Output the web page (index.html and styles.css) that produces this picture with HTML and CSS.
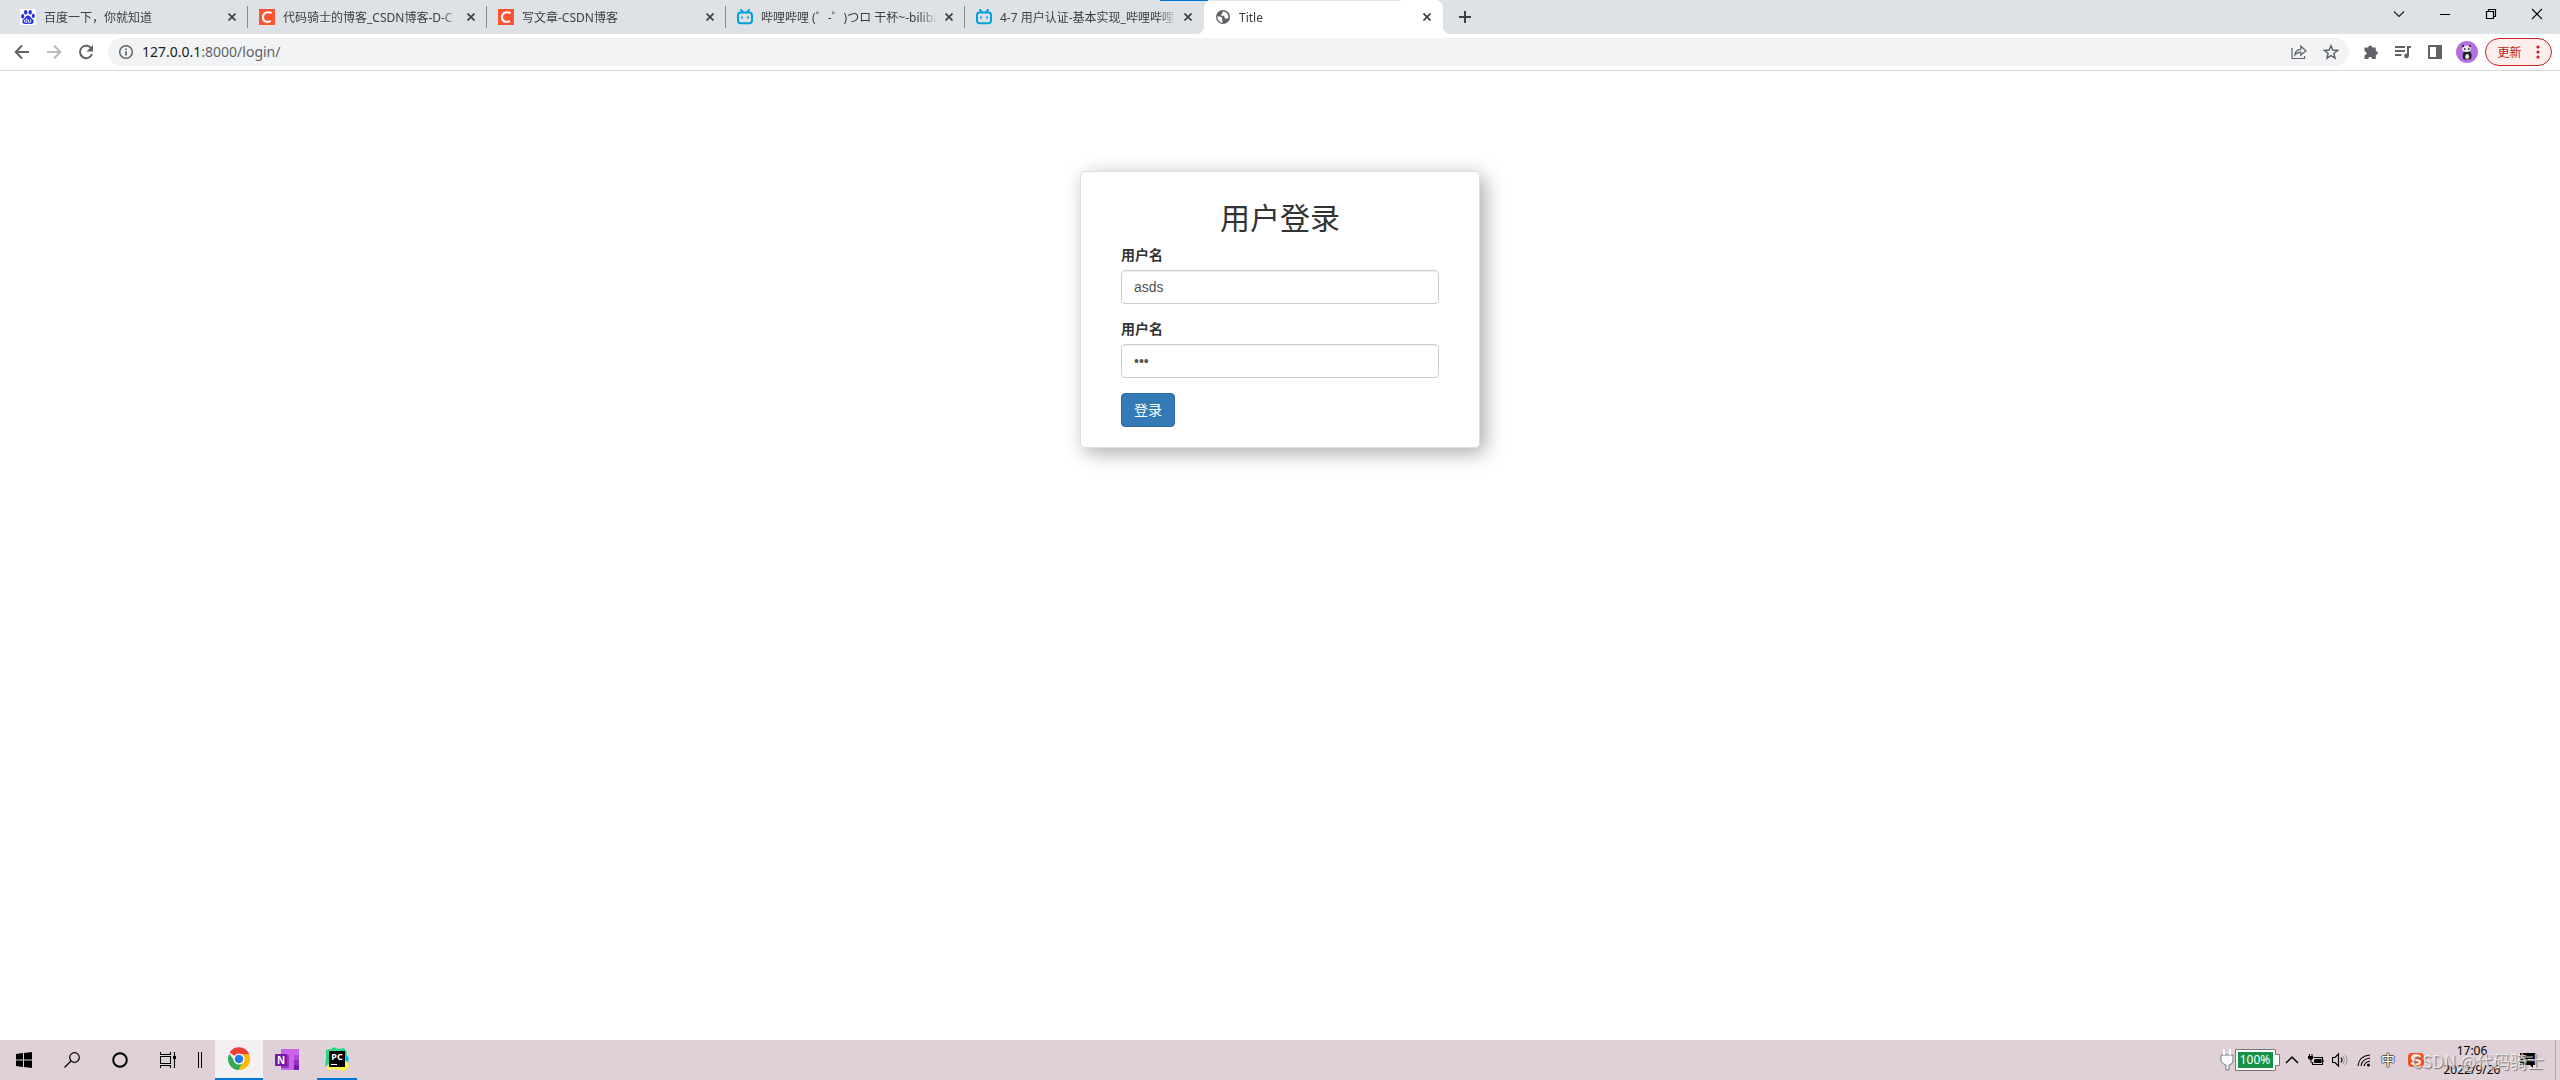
FILE: index.html
```html
<!DOCTYPE html>
<html lang="zh">
<head>
<meta charset="utf-8">
<title>Title</title>
<link rel="stylesheet" href="styles.css">
</head>
<body>
<svg class="defs" aria-hidden="true">
  <symbol id="x" viewBox="0 0 8 8"><path d="M.5.5l7 7m0-7l-7 7" stroke="#3c4043" stroke-width="1.7"/></symbol>
  <symbol id="bili" viewBox="0 0 16 16"><path d="M4 .8l2 2.4M12 .8l-2 2.4" stroke="#00a1d6" stroke-width="1.8" stroke-linecap="round"/><rect x="1" y="3.6" width="14" height="10.6" rx="2.6" fill="none" stroke="#00a1d6" stroke-width="2"/><path d="M5 7.4v2M11 7.4v2" stroke="#00a1d6" stroke-width="1.8"/></symbol>
  <symbol id="csdn" viewBox="0 0 16 16"><path fill="#fc5531" d="M0 0h16v16H0z"/><path d="M12.6 4.1C9 2.200 4 3.300 3.900 8.300c0 4.600 4.400 5.400 8 3.900" fill="none" stroke="#fff" stroke-width="2"/></symbol>
</svg>

<header class="browser">
  <div class="tabstrip">
    <nav class="tabs">
      <div class="tab">
        <svg class="fav" viewBox="0 0 16 16"><rect width="16" height="16" rx="1" fill="#fff"/><g fill="#2932e1"><ellipse cx="5.700" cy="3.300" rx="1.700" ry="2.400"/><ellipse cx="10.200" cy="3.300" rx="1.700" ry="2.400"/><ellipse cx="2.700" cy="7.200" rx="1.600" ry="2.200"/><ellipse cx="13.300" cy="6.900" rx="1.600" ry="2.100"/><path d="M8 6.600c2 0 2.700 2.200 4.400 3.500 2.200 1.700 1.400 5-1.200 5-1.400 0-1.800-.4-3.200-.4s-1.800.4-3.200.4c-2.700 0-3.400-3.300-1.200-5C5.300 8.800 6 6.600 8 6.600z"/></g><path d="M6.800 9.300v4h-1.300a1.200 1.200 0 010-2.500h1.300M8.500 10.500v2.700h2.200v-2.700" fill="none" stroke="#fff" stroke-width=".9"/></svg>
        <a class="name" href="#">百度一下，你就知道</a>
        <button class="close" aria-label="关闭"><svg><use href="#x"/></svg></button>
      </div>
      <div class="tab">
        <svg class="fav"><use href="#csdn"/></svg>
        <a class="name" href="#">代码骑士的博客_CSDN博客-D-C</a>
        <button class="close" aria-label="关闭"><svg><use href="#x"/></svg></button>
      </div>
      <div class="tab">
        <svg class="fav"><use href="#csdn"/></svg>
        <a class="name" href="#">写文章-CSDN博客</a>
        <button class="close" aria-label="关闭"><svg><use href="#x"/></svg></button>
      </div>
      <div class="tab">
        <svg class="fav"><use href="#bili"/></svg>
        <a class="name" href="#">哔哩哔哩 (゜-゜)つロ 干杯~-bilibili</a>
        <button class="close" aria-label="关闭"><svg><use href="#x"/></svg></button>
      </div>
      <div class="tab last">
        <svg class="fav"><use href="#bili"/></svg>
        <a class="name" href="#">4-7 用户认证-基本实现_哔哩哔哩</a>
        <button class="close" aria-label="关闭"><svg><use href="#x"/></svg></button>
      </div>
      <div class="tab active">
        <svg class="fav" viewBox="0 0 16 16"><circle cx="8" cy="8" r="7" fill="#5f6368"/><path d="M8.300 2.300c-1.300.8-.3 2-1.500 2.600-1 .5-1.200 1.200-.5 1.700.8.500 2.600-.2 3.200 1 .5 1-.3 1.700.6 2 1 .3 1.800-.6 3.300-.4.400-3-1.500-6-5.100-6.900zM2.400 7.300c2 .2 3.900.5 4.500 1.500.5 1-.2 1.600.2 2.400.4.600.5 1.500.3 2.500-3.100-.3-5.400-3.200-5-6.400z" fill="#fff"/></svg>
        <a class="name" href="#">Title</a>
        <button class="close" aria-label="关闭"><svg><use href="#x"/></svg></button>
      </div>
    </nav>
    <button class="newtab" aria-label="新标签页"><svg viewBox="0 0 12 12"><path d="M6 0v12M0 6h12" stroke="#3c4043" stroke-width="2"/></svg></button>
    <div class="loading"></div>
    <div class="winctl">
      <button aria-label="搜索标签页"><svg viewBox="0 0 12 12"><path d="M1 3.500l5 5 5-5" fill="none" stroke="#222" stroke-width="1.200"/></svg></button>
      <button aria-label="最小化"><svg viewBox="0 0 12 12"><path d="M1 6.500h10" stroke="#000"/></svg></button>
      <button aria-label="还原"><svg viewBox="0 0 12 12"><path d="M1.500 3.500h7v7h-7zM3.500 3V1.500h7v7H9" fill="none" stroke="#000" stroke-width="1.200"/></svg></button>
      <button aria-label="关闭窗口"><svg viewBox="0 0 12 12"><path d="M1 1l10 10M11 1L1 11" stroke="#000" stroke-width="1.100"/></svg></button>
    </div>
  </div>
  <div class="toolbar">
    <button class="nav" aria-label="后退"><svg viewBox="0 0 16 16"><path d="M15 8H2M8 1.500L1.700 8 8 14.500" fill="none" stroke="#5f6368" stroke-width="2"/></svg></button>
    <button class="nav" aria-label="前进"><svg viewBox="0 0 16 16"><path d="M1 8h13M8 1.500L14.300 8 8 14.500" fill="none" stroke="#babcbe" stroke-width="2"/></svg></button>
    <button class="nav" aria-label="重新加载"><svg viewBox="0 0 16 16"><path d="M13.600 5A6.200 6.200 0 1014 10" fill="none" stroke="#5f6368" stroke-width="2"/><path d="M15 1v6.500H8.500z" fill="#5f6368"/></svg></button>
    <div class="omnibox">
      <svg class="ico" viewBox="0 0 16 16"><circle cx="8" cy="8" r="6.300" fill="none" stroke="#5f6368" stroke-width="1.500"/><path d="M8 7.200v4.200M8 4.400v1.700" stroke="#5f6368" stroke-width="1.700"/></svg>
      <div class="url"><span>127.0.0.1</span>:8000/login/</div>
      <button aria-label="分享"><svg class="ico" viewBox="0 0 16 16"><path d="M1 4v10.500h12.500V12" fill="none" stroke="#5f6368" stroke-width="1.200"/><path d="M3.800 11c.5-4 2.700-5.600 6-5.700V2.200L15 6.800l-5.200 4.500V8.200C7 8.200 5.300 9 3.800 11z" fill="none" stroke="#5f6368" stroke-width="1.200"/></svg></button>
      <button aria-label="收藏"><svg class="ico" viewBox="0 0 16 16"><path d="M8 1.800l1.800 4.300 4.700.4-3.600 3 1.100 4.600L8 11.700l-4 2.400 1.100-4.600-3.600-3 4.700-.4z" fill="none" stroke="#5f6368" stroke-width="1.500"/></svg></button>
    </div>
    <div class="actions">
      <button aria-label="扩展程序"><svg class="ico" viewBox="0 0 16 16"><path d="M1.500 3.500h3.700a2 2 0 114 0h3.600v3.600a2 2 0 110 4V15H9.200a2 2 0 10-4 0H1.500v-3.700a2 2 0 100-4z" fill="#5f6368"/></svg></button>
      <button aria-label="媒体控件"><svg class="ico" viewBox="0 0 16 16"><path d="M0 3h10M0 7h10M0 11h6.500M13 12V3h3" fill="none" stroke="#5f6368" stroke-width="2"/><circle cx="11.500" cy="12" r="2.400" fill="#5f6368"/></svg></button>
      <button aria-label="侧边栏"><svg class="ico" viewBox="0 0 16 16"><path d="M1 1h14v14H1zM3 3v10h6V3z" fill="#5f6368" fill-rule="evenodd"/></svg></button>
      <button class="avatar" aria-label="用户"><svg viewBox="0 0 22 22"><circle cx="11" cy="11" r="11" fill="#b46fe3"/><path d="M8 10.500c-2 3-1.500 7.500.5 8h5.500c2-1 2-5 .5-8z" fill="#222"/><ellipse cx="11.200" cy="15.500" rx="2" ry="2.600" fill="#e6e6e6"/><ellipse cx="10.500" cy="7.800" rx="4.400" ry="3.300" fill="#e8e6ea"/><circle cx="7" cy="5" r="1.200" fill="#333"/><circle cx="14" cy="5" r="1.200" fill="#444"/><path d="M8 8h1.500M12 8h1.500" stroke="#222" stroke-width="1.300"/></svg></button>
      <button class="update">更新<svg viewBox="0 0 4 14"><g fill="#c5221f"><circle cx="2" cy="2" r="1.600"/><circle cx="2" cy="7" r="1.600"/><circle cx="2" cy="12" r="1.600"/></g></svg></button>
    </div>
  </div>
</header>

<main class="page">
  <form class="account">
    <h2>用户登录</h2>
    <div class="group">
      <label for="user">用户名</label>
      <input id="user" type="text" value="asds">
    </div>
    <div class="group">
      <label for="pwd">用户名</label>
      <input id="pwd" type="password" value="123">
    </div>
    <button class="submit" type="button">登录</button>
  </form>
</main>

<footer class="taskbar">
  <div class="apps">
    <button aria-label="开始"><svg viewBox="0 0 16 16"><path d="M0 2l7-1v6.500H0zM8 .9L16 0v7.500H8zM0 8.500h7V15l-7-1zM8 8.500h8V16l-8-1z"/></svg></button>
    <button aria-label="搜索"><svg viewBox="0 0 16 16"><circle cx="10.500" cy="5.500" r="4.800" fill="none" stroke="#000" stroke-width="1.200"/><path d="M7 9L.5 15.500" stroke="#000" stroke-width="1.300"/></svg></button>
    <button aria-label="Cortana"><svg viewBox="0 0 16 16"><circle cx="8" cy="8" r="6.800" fill="none" stroke="#000" stroke-width="2"/></svg></button>
    <button aria-label="任务视图"><svg viewBox="0 0 16 16"><path d="M.5 0v2.500h10V0M.5 16v-2.500h10V16M.5 4.500h10v7H.5zM14.500 0v16" fill="none" stroke="#000" stroke-width="1.100"/><path d="M13 4h3v3h-3z"/></svg></button>
    <span class="grip"></span>
    <button class="chrome" aria-label="Chrome"><svg viewBox="0 0 24 24"><path d="M12 12L2.500 5.500A11 11 0 0122.200 7.500H12z" fill="#ea4335"/><path d="M12 7.500h10.200A11 11 0 0111.500 23L16 14z" fill="#fbbc04"/><path d="M2.300 6.800A11 11 0 0011.500 23L16 14.500l-8 0z" fill="#34a853"/><circle cx="12" cy="12" r="5.600" fill="#fff"/><circle cx="12" cy="12" r="4.300" fill="#2879e8"/></svg></button>
    <button aria-label="OneNote"><svg viewBox="0 0 24 24"><path fill="#ca64ea" d="M6 1h18v21H6z"/><path fill="#ae4bd5" d="M19 7h5v5h-5z"/><path fill="#9332bf" d="M19 12h5v5h-5z"/><path fill="#7719aa" d="M19 17h5v5h-5zM0 6h12v12H0z"/><path fill="#8f3bb5" d="M12 7h2v13H6v-2h6z"/><text x="6" y="16" class="glyph">N</text></svg></button>
    <button class="pycharm" aria-label="PyCharm"><svg viewBox="0 0 24 24"><path fill="#21d789" d="M1 3l5-1 3-2 4 2 6-1 3 4-3 14H3L0 19l1-8z"/><path fill="#07c3f2" d="M18 9l2-3 4 5-1 4-5-2z"/><path fill="#fcf84a" d="M19 12l4 5 1 3-5 4-8-2-8 1-1-5z"/><path d="M4 4h16v16H4z"/><path fill="#fff" d="M6 17h6v1H6z"/><text x="12" y="13" class="glyph small">PC</text></svg></button>
  </div>
  <div class="tray">
    <svg class="battery" viewBox="0 0 62 24"><path d="M4 2v5M10 2v5M1 7h12v6q0 3-4 4v5H6v-5q-4-1-5-4z" fill="#fff" stroke="#777"/><path d="M4 1v6M10 1v6" stroke="#fff" stroke-width="2"/><path d="M15.500 1.500h40v5h4v11h-4v5h-40z" fill="#fff" stroke="#777"/><path fill="#169347" d="M18 4h35v16H18z"/><text x="35" y="16">100%</text></svg>
    <svg viewBox="0 0 16 16"><path d="M2 11l6-6 6 6" fill="none" stroke="#000" stroke-width="1.500"/></svg>
    <svg viewBox="0 0 16 16"><path d="M5.500 5.500h9v7h-10V10M15 8v2" fill="none" stroke="#000" stroke-width="1.200"/><path d="M7 7h6.500v4H6V8zM0 4h5v2.500L3.500 8v3h-1V8L0 6.500zM1 2h1v2H1zM3.500 2h1v2h-1z"/></svg>
    <svg viewBox="0 0 16 16"><path d="M.5 5.500H3L6.500 2v12L3 10.500H.5zM9 5.500q2 2.500 0 5" fill="none" stroke="#000" stroke-width="1.200"/><path d="M11 4q3 4 0 8M13 2.500q4 5.500 0 11" fill="none" stroke="#999"/></svg>
    <svg viewBox="0 0 16 16"><path d="M2 14Q3 4 14 3M5 14q1-7 9-8M8 14q1-4 6-5" fill="none" stroke="#000" stroke-width="1.100"/><circle cx="12.500" cy="13" r="1.500"/></svg>
    <span class="ime">中</span>
    <svg class="sogou" viewBox="0 0 16 16"><rect x="0" y="1" width="16" height="14" rx="4" fill="#f4511e"/><path d="M12 4Q4 2 4 6c0 3 8 1 8 4s-6 3-9 1" fill="none" stroke="#fff" stroke-width="2"/></svg>
    <div class="clock"><time>17:06</time><time>2022/9/26</time></div>
    <svg class="notice" viewBox="0 0 16 16"><path d="M0 1h16v12h-3v3l-3-3H0z"/><path d="M3 5h10M3 8h10" stroke="#ddd"/></svg>
    <span class="peek"></span>
  </div>
  <div class="mark">CSDN @代码骑士</div>
</footer>
</body>
</html>
```
FILE: styles.css
```css
* { box-sizing: border-box; }
body { margin: 0; min-height: 100vh; display: flex; flex-direction: column; background: #fff; font-family: "Noto Sans", "Noto Sans CJK SC", sans-serif; font-size: 12px; color: #3c4043; }
button { border: 0; padding: 0; background: none; font: inherit; color: inherit; display: flex; align-items: center; justify-content: center; }
a { color: inherit; text-decoration: none; }
.defs { position: absolute; width: 0; height: 0; }

.tabstrip { position: relative; display: flex; height: 34px; background: #dee1e6; }
.tabs { display: flex; padding-left: 9px; }
.tab { position: relative; display: flex; align-items: center; width: 239px; padding: 0 7px 0 11px; border-right: 1px solid #86898d; border-image: linear-gradient(transparent 7px, #86898d 7px, #86898d 27px, transparent 27px) 1; }
.tab.last { border-image: none; border-color: transparent; }
.tab.active { background: #fff; border: 0; border-radius: 8px 8px 0 0; padding: 0 8px 0 11px; }
.tab.active::before, .tab.active::after { content: ""; position: absolute; bottom: 0; width: 8px; height: 8px; }
.tab.active::before { right: 100%; background: radial-gradient(circle at 0 0, transparent 8px, #fff 8px); }
.tab.active::after { left: 100%; background: radial-gradient(circle at 100% 0, transparent 8px, #fff 8px); }
.fav { width: 16px; height: 16px; flex: none; }
.name { flex: 1; margin: 0 4px 0 8px; padding-top: 2px; line-height: 20px; white-space: nowrap; overflow: hidden; mask-image: linear-gradient(to right, #000 90%, transparent); }
.close { width: 16px; height: 16px; }
.close svg { width: 8px; height: 8px; }
.newtab { width: 44px; }
.newtab svg { width: 12px; height: 12px; }
.loading { position: absolute; top: 0; left: 1160px; width: 241px; height: 1px; background: linear-gradient(to right, #0078d7 48px, #e3e3e3 48px); }
.winctl { display: flex; margin-left: auto; height: 28px; }
.winctl button { width: 46px; }
.winctl svg { width: 12px; height: 12px; }

.toolbar { display: flex; align-items: center; height: 37px; padding: 0 8px 0 6px; border-bottom: 1px solid #d5d7da; }
.nav { width: 32px; height: 32px; }
.nav svg { width: 16px; height: 16px; }
.ico { width: 16px; height: 16px; flex: none; }
.omnibox { flex: 1; display: flex; align-items: center; height: 28px; margin-left: 6px; padding: 0 10px; border-radius: 14px; background: #f1f3f4; }
.url { flex: 1; margin-left: 8px; font-size: 14px; line-height: 20px; color: #5f6368; }
.url span { color: #202124; }
.omnibox button { width: 16px; margin-left: 16px; }
.actions { display: flex; align-items: center; gap: 16px; margin-left: 14px; }
.avatar { width: 22px; height: 22px; margin: 0 -9px 0 -3px; }
.avatar svg { width: 22px; height: 22px; }
.update { width: 67px; height: 28px; gap: 14px; border: 1px solid #c5221f; border-radius: 14px; background: #fceeed; color: #c5221f; }
.update svg { width: 4px; height: 14px; }

.page { flex: 1; padding: 100px 20px; font-family: "Liberation Sans", "Noto Sans CJK SC", sans-serif; font-size: 14px; line-height: 20px; color: #333; }
.account { width: 400px; margin: 0 auto; padding: 20px 40px; border: 1px solid #ddd; border-radius: 5px; box-shadow: 5px 5px 20px #aaa; }
.account h2 { margin: 10px 0; font-size: 30px; font-weight: 400; line-height: 33px; text-align: center; }
.group { margin-bottom: 15px; }
.group label { display: block; margin-bottom: 5px; font-weight: 700; }
.group input { display: block; width: 100%; height: 34px; padding: 6px 12px; border: 1px solid #ccc; border-radius: 4px; box-shadow: inset 0 1px 1px #eee; font: inherit; color: #555; }
.submit { height: 34px; padding: 6px 12px; border: 1px solid #2e6da4; border-radius: 4px; background: #337ab7; color: #fff; }

.taskbar { position: relative; display: flex; justify-content: space-between; height: 40px; background: #e0d0d8; color: #000; }
.apps, .tray { display: flex; align-items: center; }
.apps button { width: 48px; height: 40px; }
.apps svg { width: 16px; height: 16px; }
.grip { width: 4px; height: 16px; margin: 0 13px 0 6px; border: solid #000; border-width: 0 1px; }
.apps .chrome { background: #f4eff2; border-bottom: 2px solid #0078d7; }
.apps .chrome ~ button svg, .apps .chrome svg { width: 24px; height: 24px; }
.apps .pycharm { width: 40px; margin-left: 6px; border-bottom: 2px solid #0078d7; }
.glyph { font: 700 10px "Noto Sans", sans-serif; fill: #fff; text-anchor: middle; }
.glyph.small { font-size: 9px; }
.tray { gap: 8px; }
.tray svg { width: 16px; height: 16px; flex: none; }
.tray .battery { width: 62px; height: 24px; margin-right: -6px; }
.battery text { font-size: 12px; fill: #fff; text-anchor: middle; }
.ime { width: 16px; font-size: 14px; line-height: 20px; color: #fff; text-align: center; text-shadow: 1px 0 #555, -1px 0 #555, 0 1px #555, 0 -1px #555; }
.sogou { margin-left: 4px; }
.clock { width: 80px; display: flex; flex-direction: column; align-items: center; line-height: 19px; }
.peek { width: 5px; height: 40px; margin-left: 11px; border-left: 1px solid #b5a8af; }
.mark { position: absolute; right: 16px; bottom: 7px; font: 17px/24px "Noto Sans CJK SC", sans-serif; color: #ffffffb0; text-shadow: 1px 1px 1px #777; }
```
